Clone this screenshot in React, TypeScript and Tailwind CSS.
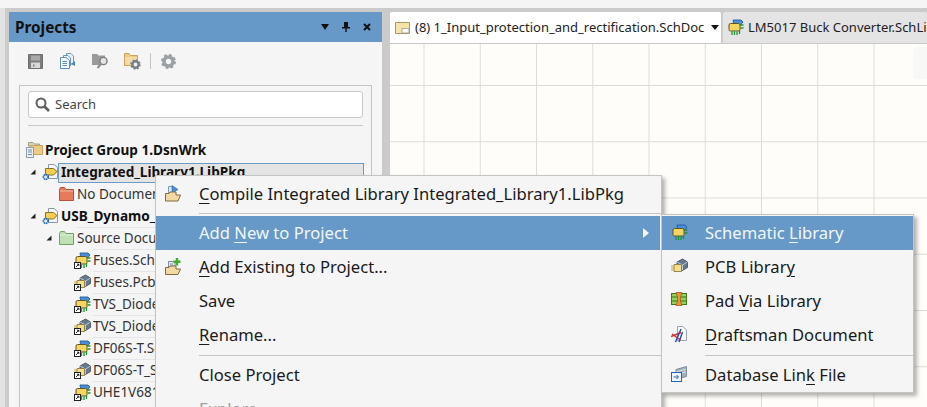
import React from "react";

const Floppy = () => (
  <svg width="15" height="15" viewBox="0 0 15 15" className="shrink-0">
    <path d="M0.5 0.5H14.5V14.5H0.5Z" fill="#7d7d7d" stroke="#6e6e6e" />
    <rect x="3" y="1.5" width="9" height="5" fill="#a9a9a9" />
    <rect x="3" y="8.5" width="9" height="5.5" fill="#d8d8d8" />
    <rect x="5" y="10.5" width="1.5" height="2" fill="#777" />
  </svg>
);
const Docs = () => (
  <svg width="15" height="16" viewBox="0 0 15 16" className="shrink-0">
    <path d="M6.5 .5H11L13.5 3V11H6.5Z" fill="#eaf2fa" stroke="#6b97c2" />
    <path d="M3.5 2.5H8L10.5 5V13H3.5Z" fill="#eaf2fa" stroke="#6b97c2" />
    <path d="M.5 4.5H6L9.5 7.5V15.5H.5Z" fill="#f4f8fc" stroke="#5c8dbd" />
    <path d="M2.5 8.5H7M2.5 10.5H7M2.5 12.5H7" stroke="#5c8dbd" />
    <path d="M11 11L15 8V13Z" fill="#4c86c0" />
  </svg>
);
const FolderSearch = () => (
  <svg width="17" height="16" viewBox="0 0 17 16" className="shrink-0">
    <path d="M0 1H5L6.5 2.5H13V12H0Z" fill="#9a9a9a" />
    <circle cx="11.5" cy="8" r="3.6" fill="#e4e4e4" stroke="#7d7d7d" strokeWidth="1.4" />
    <path d="M9 11L5.5 15" stroke="#8c8c8c" strokeWidth="2" />
  </svg>
);
const GearShape = ({ r, c, color, hole }: { r: number; c: number; color: string; hole: string }) => (
  <>
    <circle cx={c} cy={c} r={r} fill="none" stroke={color} strokeWidth={r * 0.5} strokeDasharray={`${r * 0.42} ${r * 0.36}`} />
    <circle cx={c} cy={c} r={r * 0.75} fill="none" stroke={color} strokeWidth={r * 0.6} />
    <circle cx={c} cy={c} r={r * 0.3} fill={hole} />
  </>
);
const FolderGear = () => (
  <svg width="17" height="17" viewBox="0 0 17 17" className="shrink-0">
    <path d="M.5 .5H5L6.5 2.5H13.5V12.5H.5Z" fill="#eccb86" stroke="#c9a35c" />
    <path d="M1 4H13V12H1Z" fill="#f3dca8" />
    <g transform="translate(6 6)">
      <circle cx="5.5" cy="5.5" r="4.8" fill="#f5f5f5" />
      <GearShape r={4.2} c={5.5} color="#7a7f84" hole="#f0f0f0" />
    </g>
  </svg>
);
const Gear = () => (
  <svg width="15" height="15" viewBox="0 0 15 15" className="shrink-0">
    <GearShape r={6} c={7.5} color="#9aa0a5" hole="#f5f5f5" />
  </svg>
);
const Search = () => (
  <svg width="15" height="15" viewBox="0 0 15 15" className="shrink-0">
    <circle cx="6" cy="6" r="4.5" fill="none" stroke="#5f5f5f" strokeWidth="2" />
    <path d="M9.5 9.5L14 14" stroke="#5f5f5f" strokeWidth="2.6" />
  </svg>
);
const GroupIcon = () => (
  <svg width="17" height="16" viewBox="0 0 17 16" className="shrink-0">
    <path d="M2.5 .5H7L8.5 2H13.5V4H2.5Z" fill="#d9d2c2" stroke="#a39a86" />
    <path d="M4 3.5H16.5V12.5H4Z" fill="#eecb85" stroke="#c7a35e" />
    <path d="M.5 5.5H7.5V15.5H.5Z" fill="#eef2f6" stroke="#8a9aab" />
    <path d="M2 8H6M2 10H6M2 12.5H6" stroke="#6a8bab" />
  </svg>
);
const PkgIcon = () => (
  <svg width="17" height="17" viewBox="0 0 17 17" className="shrink-0">
    <path d="M6.5 .5H12L15.5 3.5V14.5H6.5Z" fill="#f3f5f8" stroke="#8b98a8" />
    <path d="M3.5 4.5H11.5L15 7.5L11.5 11H3.5Z" fill="#f4cf50" stroke="#8a7022" />
    <circle cx="3.8" cy="13" r="2.4" fill="#dbe8f5" stroke="#1f63ad" strokeWidth="1.6" strokeDasharray="1.5 .5" />
  </svg>
);
const FolderColor = ({ fill, stroke }: { fill: string; stroke: string }) => (
  <svg width="15" height="14" viewBox="0 0 15 14" className="shrink-0">
    <path d="M.5 2.5V13.5H14.5V2.5H7L5.5 .5H1.5Z" fill={fill} stroke={stroke} />
    <path d="M1 4H14" stroke="#ffffff" strokeOpacity=".5" />
  </svg>
);
const Shortcut = () => (
  <g>
    <rect x=".5" y="10.5" width="6" height="6" fill="#fff" stroke="#222" />
    <path d="M2 15L4.8 12.2M3 12.2H4.8V14" stroke="#111" strokeWidth=".9" fill="none" />
  </g>
);
const SchDocIcon = ({ shortcut = true }: { shortcut?: boolean }) => (
  <svg width="17" height="17" viewBox="0 0 17 17" className="shrink-0">
    <path d="M6 1H14L16 3L12.5 7H7Z" fill="#4a8fd6" stroke="#1f5f9e" strokeWidth=".9" />
    <rect x="2" y="4.5" width="11" height="7.5" rx="1.5" fill="#f5d560" stroke="#5f5520" />
    <path d="M5 12.5V16M7.5 12.5V16M10 12.5V16M12.5 11V15M13.5 6H16.5M13.5 9H16.5" stroke="#1f9430" strokeWidth="1.3" />
    {shortcut && <Shortcut />}
  </svg>
);
const PcbIcon = ({ shortcut = true }: { shortcut?: boolean }) => (
  <svg width="17" height="17" viewBox="0 0 17 17" className="shrink-0">
    <path d="M6 4L11.5 1L16.5 4V9.5L11.5 12.5L6 9.5Z" fill="#64798c" stroke="#3d4a56" strokeWidth=".8" />
    <path d="M6 4L11.5 7L16.5 4M11.5 7V12" fill="none" stroke="#d5dde4" strokeWidth=".8" />
    <path d="M3 6.5H10.5V13.5H3Z" fill="#f3de90" stroke="#8a7a40" strokeWidth=".9" />
    <path d="M0 8H3M0 10H3M0 12H3" stroke="#c9a63c" />
    {shortcut && <Shortcut />}
  </svg>
);
const PadViaIcon = () => (
  <svg width="16" height="14" viewBox="0 0 16 14" className="shrink-0">
    <rect x=".5" y="1.5" width="15" height="11" fill="#93d05c" stroke="#3b7a1f" />
    <path d="M1 5H15M1 9H15" stroke="#3b7a1f" />
    <path d="M5 0.5H11L9.5 5V9L11 13.5H5L6.5 9V5Z" fill="#ee9438" stroke="#a85a1a" strokeWidth=".8" />
  </svg>
);
const DraftIcon = () => (
  <svg width="16" height="17" viewBox="0 0 16 17" className="shrink-0">
    <path d="M6.5 .5H12L15.5 4V14.5H6.5Z" fill="#f6f8fb" stroke="#98a4b3" />
    <path d="M0 10.5L10 6.5M1 8L9.5 14" stroke="#d92e2e" strokeWidth="1.4" />
    <path d="M4.5 16L10 3M8 16L11.5 6" stroke="#1f4cc0" strokeWidth="1.4" />
  </svg>
);
const DbIcon = () => (
  <svg width="16" height="16" viewBox="0 0 16 16" className="shrink-0">
    <path d="M5 3.5L15.5 .5V10.5L10 12H5Z" fill="#a2b0bd" stroke="#6f7d8a" strokeWidth=".8" />
    <path d="M5 6L15 3.2M5 8.5L15 5.8" stroke="#e3e8ed" strokeWidth=".9" />
    <rect x=".5" y="6.5" width="10" height="9" fill="#eef5fc" stroke="#1f66b4" />
    <path d="M2.5 11H7M5.5 9L7.5 11L5.5 13" stroke="#1f66b4" fill="none" />
  </svg>
);
const CompileIcon = () => (
  <svg width="16" height="17" viewBox="0 0 16 17" className="shrink-0">
    <path d="M3.5 1.5H8V9H3.5Z" fill="#dbe7f3" stroke="#7e9cbb" />
    <path d="M7 0.5L13 4.5L7 8.5Z" fill="#4e8ed0" stroke="#2f6ca8" strokeWidth=".6" />
    <path d="M.5 8.5H4L5 7H11V10H15.5L13 16H.5Z" fill="#f2d9a4" stroke="#7c6a44" />
  </svg>
);
const AddExistingIcon = () => (
  <svg width="16" height="17" viewBox="0 0 16 17" className="shrink-0">
    <path d="M3.5 3.5H10V10H3.5Z" fill="#e8edf2" stroke="#7a8a9a" />
    <path d="M5 6H8M5 8H8" stroke="#7a8a9a" />
    <path d="M.5 9.5H4L5 8H11V11H15.5L13 16.5H.5Z" fill="#f2d9a4" stroke="#7c6a44" />
    <path d="M12 0V7.5M8.5 3.7H15.5" stroke="#3fae2a" strokeWidth="2.4" />
  </svg>
);
const TabDocIcon = () => (
  <svg width="15" height="12" viewBox="0 0 15 12" className="shrink-0">
    <path d="M.5 .5H14.5V11.5H.5Z" fill="#f5e3a8" stroke="#a89a6e" />
    <rect x="7" y="6.5" width="7" height="4.5" fill="#f8f8f4" stroke="#8a8a80" strokeWidth=".6" />
  </svg>
);
const Expand = () => (
  <svg width="6" height="6" viewBox="0 0 6 6" className="shrink-0">
    <path d="M5.5 .5V5.5H.5Z" fill="#222" />
  </svg>
);

type Row = { level: number; text: string; icon: React.ReactNode; bold?: boolean; open?: boolean; selected?: boolean; line?: boolean };

const rows: Row[] = [
  { level: 0, text: "Project Group 1.DsnWrk", icon: <GroupIcon />, bold: true },
  { level: 1, text: "Integrated_Library1.LibPkg", icon: <PkgIcon />, bold: true, open: true, selected: true },
  { level: 2, text: "No Documents Added", icon: <FolderColor fill="#e8795a" stroke="#b5533a" /> },
  { level: 1, text: "USB_Dynamo_Charger.PrjPcb", icon: <PkgIcon />, bold: true, open: true },
  { level: 2, text: "Source Documents", icon: <FolderColor fill="#bfe0b4" stroke="#6fa265" />, open: true, line: true },
  { level: 3, text: "Fuses.SchLib", icon: <SchDocIcon />, line: true },
  { level: 3, text: "Fuses.PcbLib", icon: <PcbIcon />, line: true },
  { level: 3, text: "TVS_Diode.SchLib", icon: <SchDocIcon />, line: true },
  { level: 3, text: "TVS_Diode.PcbLib", icon: <PcbIcon />, line: true },
  { level: 3, text: "DF06S-T.SchLib", icon: <SchDocIcon />, line: true },
  { level: 3, text: "DF06S-T_S.PcbLib", icon: <PcbIcon />, line: true },
  { level: 3, text: "UHE1V681.SchLib", icon: <SchDocIcon />, line: true },
];

const levelPad = ["pl-[6px]", "pl-[22px]", "pl-[38px]", "pl-[54px]"];
const arrowLeft = ["left-0", "left-[10px]", "left-[26px]", "left-[42px]"];

function TreeRow({ r }: { r: Row }) {
  return (
    <div className={`relative flex h-[22px] items-center ${levelPad[r.level]}`}>
      {r.open && <span className={`absolute top-[8px] ${arrowLeft[r.level]}`}><Expand /></span>}
      <span className="flex w-[16px] justify-center">{r.icon}</span>
      <span
        className={`ml-[3px] flex h-[22px] min-w-0 flex-1 items-center whitespace-nowrap ${r.bold ? "text-[13.6px] font-bold text-[#111]" : "text-[13.5px] text-[#333]"} ${r.line ? "border-t border-[#e6e6e6]" : ""}`}
      >
        {r.selected ? (
          <span className="-ml-[3px] mr-[7px] mt-[1px] flex h-[20px] flex-1 items-center border border-[#6d9bc8] bg-[#e4e4e4] pl-[2px]">{r.text}</span>
        ) : (
          r.text
        )}
      </span>
    </div>
  );
}

type Item = { icon?: React.ReactNode; label: React.ReactNode; active?: boolean; arrow?: boolean; disabled?: boolean };

function MenuItem({ it, pad }: { it: Item; pad: string }) {
  return (
    <div
      className={`relative flex h-[34px] items-center ${pad} text-[16.6px] ${it.active ? "bg-[#6699c8] text-[#f2f6fa]" : it.disabled ? "text-[#a0a0a0]" : "text-[#1a1a1a]"}`}
    >
      {it.icon && <span className="absolute left-[9px] top-[8px] flex w-[16px] justify-center">{it.icon}</span>}
      <span className="mt-[1px] whitespace-nowrap">{it.label}</span>
      {it.arrow && (
        <svg width="6" height="10" viewBox="0 0 6 10" className="absolute left-[487px] top-[12px]">
          <path d="M0 0L6 5L0 10Z" fill="#f5f5f5" />
        </svg>
      )}
    </div>
  );
}

const U = ({ children }: { children: React.ReactNode }) => <span className="underline decoration-1 underline-offset-[3px]">{children}</span>;

export default function App() {
  return (
    <div className="relative h-[407px] w-[927px] overflow-hidden bg-[#f5f5f5] font-['Noto_Sans',sans-serif]">
      <div className="h-[8px] bg-[#f5f5f5]" />
      <div className="flex h-[399px]">
        <div className="w-[5px] shrink-0 bg-[#e3e3e3]" />
        <div className="flex min-w-0 flex-1 bg-[#cbcbcb] pl-[4px] pt-[4px]">
          <aside className="flex w-[373px] shrink-0 flex-col bg-[#f5f5f5]">
            <div className="flex h-[30px] items-center justify-between bg-[#6699c8] pl-[6px] pr-[11px]">
              <span className="text-[15.3px] font-bold text-[#111]">Projects</span>
              <div className="flex items-center gap-[13px]">
                <svg width="8" height="6" viewBox="0 0 8 6"><path d="M0 0H8L4 6Z" fill="#111" /></svg>
                <svg width="8" height="10" viewBox="0 0 8 10"><path d="M2 0H6V5H8V6.5H4.7V10H3.3V6.5H0V5H2Z" fill="#111" /></svg>
                <svg width="8" height="8" viewBox="0 0 8 8"><path d="M1 1L7 7M7 1L1 7" stroke="#111" strokeWidth="2" /></svg>
              </div>
            </div>
            <div className="flex h-[43px] items-center pb-[5px] pl-[19px]">
              <Floppy />
              <span className="ml-[17px]"><Docs /></span>
              <span className="ml-[17px]"><FolderSearch /></span>
              <span className="ml-[15px]"><FolderGear /></span>
              <span className="ml-[9px] h-[16px] w-px bg-[#c4c4c4]" />
              <span className="ml-[10px]"><Gear /></span>
            </div>
            <div className="ml-[10px] mr-[10px] flex-1 border border-b-0 border-[#c4c4c4] pt-[5px]">
              <div className="mx-[8px] flex h-[27px] items-center gap-[5px] rounded-[3px] border border-[#c9c9c9] bg-white pl-[6px] text-[13px] text-[#444]">
                <Search />
                <span>Search</span>
              </div>
              <div className="mx-[8px] mt-[7px] h-px bg-[#c9c9c9]" />
              <div className="pt-[13px]">
                {rows.map((r) => <TreeRow key={r.text} r={r} />)}
              </div>
            </div>
          </aside>
          <main className="ml-[8px] flex min-w-0 flex-1 flex-col">
            <div className="flex h-[32px] shrink-0 gap-[2px] overflow-hidden whitespace-nowrap border-b border-[#c9c9c9] text-[13px] text-[#222]">
              <div className="flex h-[31px] w-[331px] shrink-0 items-center rounded-t-[2px] bg-white pl-[5px]">
                <TabDocIcon />
                <span className="ml-[5px]">(8) 1_Input_protection_and_rectification.SchDoc</span>
                <svg width="8" height="5" viewBox="0 0 8 5" className="ml-[7px]"><path d="M0 0H8L4 5Z" fill="#111" /></svg>
              </div>
              <div className="flex h-[31px] min-w-0 flex-1 items-center overflow-hidden rounded-t-[2px] bg-[#e4e4e4] pl-[4px]">
                <SchDocIcon shortcut={false} />
                <span className="ml-[4px]">LM5017 Buck Converter.SchLib</span>
              </div>
            </div>
            <div className="relative flex-1 bg-[#fffdf9] bg-[linear-gradient(to_right,#dedcd7_1px,transparent_1px),linear-gradient(to_bottom,#dedcd7_1px,transparent_1px)] bg-[size:56.25px_56.25px] bg-[position:33.5px_41px]">
              <div className="absolute left-[523px] top-[3px] h-[32px] w-[20px] rounded-l-[4px] bg-[#f8f8f6]" />
            </div>
          </main>
        </div>
      </div>

      <div className="absolute left-[155px] top-[175px] h-[240px] w-[507px] border border-[#c4c4c4] bg-[#f5f5f5] pt-[1px] shadow-[3px_3px_4px_rgba(0,0,0,0.3)]">
        <MenuItem pad="pl-[43px]" it={{ icon: <CompileIcon />, label: <><U>C</U>ompile Integrated Library Integrated_Library1.LibPkg</> }} />
        <div className="ml-[43px] flex h-[5px] items-center"><div className="h-px w-full bg-[#c4c4c4]" /></div>
        <div className="mr-[1px]">
          <MenuItem pad="pl-[43px]" it={{ label: <>Add <U>N</U>ew to Project</>, active: true, arrow: true }} />
        </div>
        <MenuItem pad="pl-[43px]" it={{ icon: <AddExistingIcon />, label: <><U>A</U>dd Existing to Project...</> }} />
        <MenuItem pad="pl-[43px]" it={{ label: "Save" }} />
        <MenuItem pad="pl-[43px]" it={{ label: <><U>R</U>ename...</> }} />
        <div className="ml-[43px] flex h-[6px] items-center"><div className="h-px w-full bg-[#c4c4c4]" /></div>
        <MenuItem pad="pl-[43px]" it={{ label: "Close Project" }} />
        <MenuItem pad="pl-[43px]" it={{ label: "Explore", disabled: true }} />
      </div>

      <div className="absolute left-[661px] top-[214px] w-[253px] border border-[#c4c4c4] bg-[#f5f5f5] pt-[1px] shadow-[3px_3px_4px_rgba(0,0,0,0.3)]">
        <MenuItem pad="pl-[43px]" it={{ icon: <SchDocIcon shortcut={false} />, label: <>Schematic <U>L</U>ibrary</>, active: true }} />
        <MenuItem pad="pl-[43px]" it={{ icon: <PcbIcon shortcut={false} />, label: <>PCB Librar<U>y</U></> }} />
        <MenuItem pad="pl-[43px]" it={{ icon: <PadViaIcon />, label: <>Pad <U>V</U>ia Library</> }} />
        <MenuItem pad="pl-[43px]" it={{ icon: <DraftIcon />, label: <><U>D</U>raftsman Document</> }} />
        <div className="ml-[43px] flex h-[6px] items-center"><div className="h-px w-full bg-[#c4c4c4]" /></div>
        <MenuItem pad="pl-[43px]" it={{ icon: <DbIcon />, label: <>Database Lin<U>k</U> File</> }} />
      </div>
    </div>
  );
}
